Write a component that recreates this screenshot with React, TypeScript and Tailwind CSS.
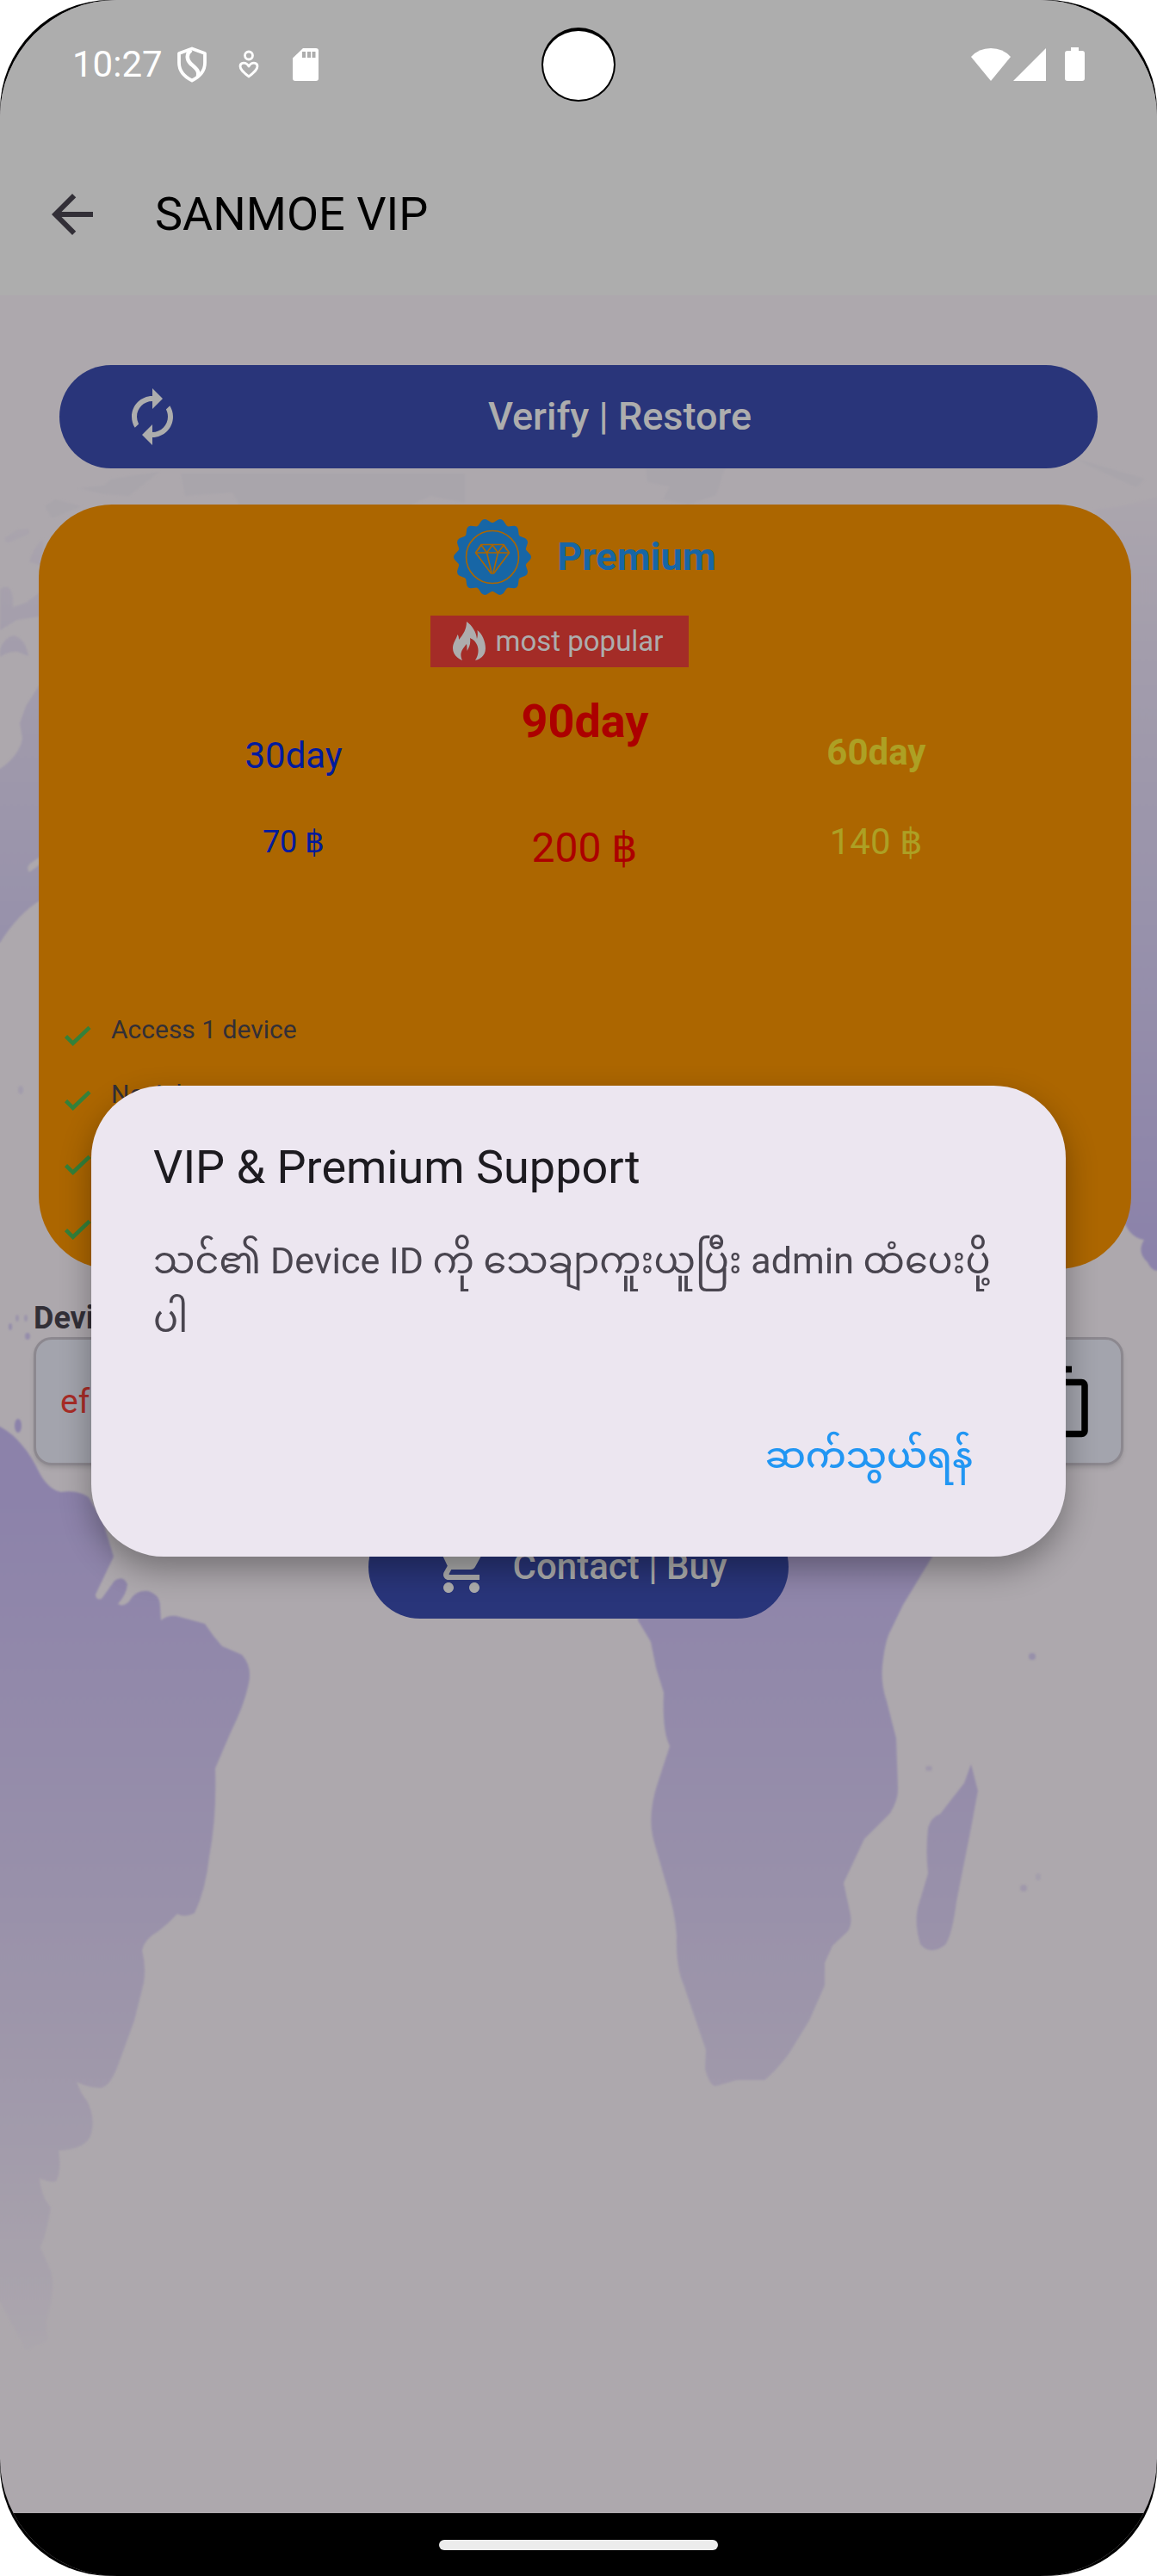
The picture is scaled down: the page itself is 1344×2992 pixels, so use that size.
import type { ReactNode } from 'react'
import { MdArrowBack, MdAutorenew, MdContentCopy, MdShoppingCart } from 'react-icons/md'

type Plan = {
  name: string
  price: string
  column: string
  title: string
  amount: string
}

const plans: Plan[] = [
  {
    name: '30day',
    price: '70 ฿',
    column: 'pt-[43px] gap-10 text-[#001a9e]',
    title: 'text-[42px] leading-[60px]',
    amount: 'text-[36px] leading-[60px]',
  },
  {
    name: '90day',
    price: '200 ฿',
    column: 'gap-[84px] text-[#ac0000]',
    title: 'text-[54px] leading-[66px] font-bold',
    amount: 'text-[48px] leading-[60px]',
  },
  {
    name: '60day',
    price: '140 ฿',
    column: 'pt-[39px] gap-11 text-[#ada024]',
    title: 'text-[42px] leading-[60px] font-bold',
    amount: 'text-[42px] leading-[60px]',
  },
]

const features = ['Access 1 device', 'No Ads', '', '']

function WorldMap() {
  return (
    <svg
      aria-hidden="true"
      className="absolute inset-0 h-full w-full"
      viewBox="0 343 1344 2576"
      preserveAspectRatio="xMidYMin slice"
    >
      <defs>
        <linearGradient id="land" gradientUnits="userSpaceOnUse" x1="0" y1="540" x2="0" y2="2740">
          <stop offset="0" stopColor="#ada8ad" />
          <stop offset="0.1" stopColor="#a39dac" />
          <stop offset="0.24" stopColor="#9892ab" />
          <stop offset="0.42" stopColor="#8b82aa" />
          <stop offset="0.54" stopColor="#8c82aa" />
          <stop offset="0.64" stopColor="#9289aa" />
          <stop offset="0.76" stopColor="#9991aa" />
          <stop offset="0.88" stopColor="#a29bab" />
          <stop offset="1" stopColor="#aca7ad" />
        </linearGradient>
        <filter id="soft" x="-5%" y="-5%" width="110%" height="110%">
          <feGaussianBlur stdDeviation="1.2" />
        </filter>
      </defs>
      <g fill="url(#land)" filter="url(#soft)">
        <path d="M-9 1656L0 1657Q15 1665 26 1679Q36 1690 47 1713Q58 1731 71 1733Q90 1730 103 1739L120 1769L132 1808L111 1852Q111 1859 118 1857L133 1836Q143 1829 148 1840Q147 1852 137 1863Q143 1867 150 1860Q158 1846 172 1848Q186 1852 186 1866L187 1882Q194 1876 205 1877L238 1886Q247 1900 258 1912L281 1922Q293 1935 289 1955Q284 1980 268 2012L250 2054Q252 2110 243 2157Q239 2195 226 2222Q215 2228 206 2223Q196 2234 184 2243Q168 2252 165 2265Q170 2285 167 2303L156 2347L137 2399Q127 2426 115 2425Q100 2424 89 2418Q94 2432 101 2440Q111 2460 106 2478Q102 2496 68 2498Q72 2520 65 2534Q56 2535 46 2530Q48 2552 59 2564Q54 2595 47 2610L60 2640Q64 2665 54 2696L56 2718L30 2730L0 2674H-9Z" />
        <path d="M741 1780V1882L756 1907L762 1937L771 1966Q769 2010 778 2028L764 2071Q751 2110 760 2140L775 2192Q784 2220 786 2248Q785 2285 794 2305L807 2343L820 2381L819 2403Q824 2422 831 2423L856 2416H888Q897 2410 916 2386L940 2347L958 2306V2280L967 2260L985 2243Q990 2235 988 2224L980 2187L1004 2136L1034 2106Q1044 2090 1043 2075L1041 2019L1030 1976Q1023 1955 1025 1935Q1028 1905 1035 1893L1049 1864L1083 1808V1780Z" />
        <path d="M1128 2049L1136 2080L1128 2123L1111 2209Q1106 2248 1098 2259Q1080 2272 1069 2258Q1062 2235 1066 2216L1078 2176Q1075 2150 1078 2123Q1082 2110 1092 2107L1120 2071Z" />
        <path d="M48 792L30 820L23 840L26 858Q22 878 0 893H-9V1095H0Q22 1060 48 1045V1003L34 1013Q30 1008 35 1003L48 994Z" />
        <path d="M0 684Q16 674 15 705L30 700L46 688V716L20 720L0 732Z" />
        <path d="M0 754Q5 740 16 738Q30 742 33 762L20 757Q10 756 0 763Z" />
        <path d="M5 625L20 615L34 614L34 620L20 626L8 631Z" />
        <path d="M34 653Q38 636 50 626V657Z" />
        <path d="M1270 592L1300 588L1353 575V1472Q1340 1482 1333 1466Q1320 1455 1329 1440Q1314 1438 1306 1420V640Z" />
        <ellipse cx="21" cy="1656" rx="4" ry="8" />
        <ellipse cx="12" cy="1541" rx="2" ry="4" opacity="0.7" />
        <ellipse cx="32" cy="1552" rx="3" ry="4" opacity="0.7" />
        <ellipse cx="20" cy="1531" rx="2" ry="4" opacity="0.5" />
        <ellipse cx="30" cy="1531" rx="2" ry="4" opacity="0.5" />
        <ellipse cx="24" cy="1266" rx="3" ry="5" opacity="0.4" />
      </g>
      <g fill="#9790aa" filter="url(#soft)">
        <ellipse cx="1199" cy="1924" rx="4" ry="4" />
        <ellipse cx="1079" cy="2054" rx="4" ry="3" opacity="0.6" />
        <ellipse cx="1189" cy="2193" rx="4" ry="4" opacity="0.6" />
        <ellipse cx="1206" cy="2180" rx="3" ry="4" opacity="0.4" />
      </g>
      <g fill="#a9a5ab" filter="url(#soft)">
        <path d="M210 550H540V584L500 576L470 590H280L270 572L215 576Z" />
        <path d="M750 545L842 544L832 575L800 586L770 580L778 565L752 560Z" />
        <path d="M92 567L120 564L130 556L185 548L150 576L120 574Z" />
        <path d="M52 588L64 580L95 588L60 602Z" />
        <path d="M1250 533L1275 540L1330 556L1320 566L1280 548Z" />
      </g>
    </svg>
  )
}

function PremiumBadge() {
  const count = 14
  const teeth = Array.from({ length: count }, (_, i) => {
    const mid = (Math.PI * 2 * i) / count
    const at = (radius: number, angle: number) =>
      `${(45 + radius * Math.cos(angle)).toFixed(1)} ${(45 + radius * Math.sin(angle)).toFixed(1)}`
    return `L${at(40, mid - 0.2)}L${at(44, mid - 0.07)}Q${at(46, mid)} ${at(44, mid + 0.07)}L${at(40, mid + 0.2)}`
  }).join('')
  return (
    <svg aria-hidden="true" className="h-[90px] w-[90px]" viewBox="0 0 90 90">
      <path d={`M${teeth.slice(1)}Z`} fill="#1766a6" />
      <g fill="none" stroke="#ac6600" strokeWidth="1.6" strokeLinejoin="round">
        <circle cx="45" cy="45" r="30.5" />
        <path d="M32 30.500H58L64.500 40L46.500 64H43.500L25.500 40Z" />
        <path d="M25.500 40H64.500M28 37L32 31L38.500 40L45 31L51.500 40L58 31L62 37M38.500 40L44 63M51.500 40L46 63" />
      </g>
    </svg>
  )
}

function Flame() {
  return (
    <svg aria-hidden="true" className="h-[46px] w-[38px]" viewBox="0 0 38 46" fill="#adadad">
      <path d="M16 0C23 5 27 12 28 20C29 17 29 14 28.500 10C34 14 38 23 38 31C38 38 34 43 26 45C30 39 31 31 27 25C24 20 21 20 20 19C21 26 19 30 16.500 34C16.500 31 16.500 29 16 26C11 32 7 37 11 45C4 42 0 37 0 31C0 24 4 21 5.500 15C7 17 7 19 7 21C12 15 16 9 16 0Z" />
    </svg>
  )
}

function CheckMark() {
  return (
    <svg aria-hidden="true" className="mt-1 h-[42px] w-[42px]" viewBox="0 0 24 24" fill="none">
      <path d="M4.300 12.300L9 17L20 6.500" stroke="#34813a" strokeWidth="2.600" />
    </svg>
  )
}

function StatusBar() {
  return (
    <div className="relative flex h-[150px] items-center justify-between pr-[84px] pl-[84px] text-white">
      <div className="flex items-center">
        <span className="text-[42px] leading-[60px]">10:27</span>
        <svg aria-hidden="true" className="ml-4 h-[42px] w-[36px]" viewBox="0 0 36 42" fill="none" stroke="#fff">
          <path strokeWidth="3.800" strokeLinejoin="round" d="M18 2.500L33 8V19C33 28 27 35 18 39.500C9 35 3 28 3 19V8Z" />
          <path strokeWidth="4.500" d="M17 4C11 9 12 15 16 19.500C22 25 27 28 25 35" />
        </svg>
        <svg aria-hidden="true" className="ml-9 h-[34px] w-[24px]" viewBox="0 0 24 34" fill="none" stroke="#fff" strokeWidth="2.800">
          <circle cx="12" cy="6.500" r="4.500" />
          <path strokeLinejoin="round" d="M12 31C6 26 2 23 2 19C2 14 9 13.500 12 19C15 13.500 22 14 22 19C22 23 18 26 12 31Z" />
        </svg>
        <svg aria-hidden="true" className="ml-[39px] h-[38px] w-[30px]" viewBox="0 0 30 38">
          <path fill="#fff" d="M12 0H27Q30 0 30 3V35Q30 38 27 38H3Q0 38 0 35V11.500Z" />
          <path fill="#adadad" d="M11 4H15V11H11ZM17 4H21V11H17ZM22.500 4H26.500V11H22.500Z" />
        </svg>
      </div>
      <div className="flex items-center">
        <svg aria-hidden="true" className="h-[40px] w-[46px]" viewBox="0 0 46 40" fill="#fff">
          <path d="M0 11Q9 1 23 1Q37 1 46 11L23 39Z" />
        </svg>
        <svg aria-hidden="true" className="ml-[3px] h-[40px] w-[38px]" viewBox="0 0 38 40" fill="#fff">
          <path d="M38 1V39H0Z" />
        </svg>
        <svg aria-hidden="true" className="ml-[22px] h-[40px] w-[23px]" viewBox="0 0 23 40" fill="#fff">
          <path d="M7 0H16V4H20Q23 4 23 7V36Q23 39 20 39H3Q0 39 0 36V7Q0 4 3 4H7Z" />
        </svg>
      </div>
      <div className="absolute top-8 left-1/2 h-[86px] w-[86px] -translate-x-1/2 rounded-full border-2 border-t-4 border-black bg-white" />
    </div>
  )
}

function PillButton({ children, className }: { children: ReactNode; className: string }) {
  return (
    <button
      type="button"
      className={`flex h-[120px] items-center rounded-full bg-[#29357a] pl-[72px] leading-[60px] font-medium text-[#adadad] ${className}`}
    >
      {children}
    </button>
  )
}

export default function App() {
  return (
    <div className="bg-white">
      <div className="overflow-hidden rounded-[128px] bg-black font-[Roboto,'Noto_Sans_Myanmar','Noto_Sans',sans-serif]">
        <div className="relative flex min-h-screen flex-col overflow-hidden rounded-[136px] bg-[#ada8ad]">
          <header className="bg-[#adadad]">
            <StatusBar />
            <div className="flex h-[193px] items-center gap-[60px] pt-1 pl-12">
              <button type="button" aria-label="Back" className="text-[#322f37]">
                <MdArrowBack className="h-[72px] w-[72px]" />
              </button>
              <h1 className="text-[54px] leading-[66px] text-black">SANMOE VIP</h1>
            </div>
          </header>

          <main className="relative flex-1 pt-[81px]">
            <WorldMap />
            <div className="relative flex flex-col">
              <PillButton className="mx-[69px] pr-12 text-[45px]">
                <MdAutorenew className="h-[72px] w-[72px]" />
                <span className="flex-1 text-center">Verify | Restore</span>
              </PillButton>

              <section className="mt-[42px] mr-[30px] ml-[45px] rounded-[85px] bg-[#ac6600] pt-4 pb-[26px]">
                <div className="flex items-center justify-center gap-[30px]">
                  <PremiumBadge />
                  <h2 className="text-[45px] leading-[60px] font-bold text-[#1766a6]">Premium</h2>
                </div>
                <div className="mt-[23px] flex justify-center pr-[60px]">
                  <div className="flex h-[60px] w-[300px] items-center gap-3 bg-[#a42c27] pl-[26px]">
                    <Flame />
                    <span className="text-[33px] leading-[42px] text-[#adadad]">most popular</span>
                  </div>
                </div>
                <div className="mx-auto mt-[30px] grid w-4/5 grid-cols-3">
                  {plans.map((plan) => (
                    <div key={plan.name} className={`flex flex-col items-center ${plan.column}`}>
                      <span className={plan.title}>{plan.name}</span>
                      <span className={plan.amount}>{plan.price}</span>
                    </div>
                  ))}
                </div>
                <ul className="mt-[163px] flex flex-col gap-[30px] px-6">
                  {features.map((feature, index) => (
                    <li key={index} className="flex h-[45px] items-start gap-[18px]">
                      <CheckMark />
                      <span className="text-[30px] leading-9 text-[#322f37]">{feature}</span>
                    </li>
                  ))}
                </ul>
              </section>

              <label htmlFor="device-id" className="mt-9 ml-[39px] text-[36px] leading-[43px] font-bold text-[#322f37]">
                Device ID
              </label>
              <div className="mx-[39px] flex h-[149px] items-center rounded-[21px] border-3 border-[#8c888f] bg-[#a3a4ad] pr-[27px] pl-7 shadow-md">
                <input
                  id="device-id"
                  readOnly
                  value="ef"
                  className="min-w-0 flex-1 bg-transparent text-[39px] leading-[48px] text-[#a82c27] outline-none"
                />
                <button type="button" aria-label="Copy device ID" className="text-black">
                  <MdContentCopy className="h-[90px] w-[90px]" />
                </button>
              </div>

              <PillButton className="mt-[58px] gap-6 self-center pr-[72px] text-[42px]">
                <MdShoppingCart className="h-[72px] w-[72px]" />
                <span>Contact | Buy</span>
              </PillButton>
            </div>
          </main>

          <footer className="flex h-[73px] items-center justify-center bg-black">
            <div className="h-3 w-[324px] rounded-full bg-[#ececec]" />
          </footer>

          <div className="absolute inset-x-0 top-[150px] bottom-[73px] flex items-center justify-center px-[106px]">
            <div
              role="dialog"
              aria-labelledby="dialog-title"
              className="flex w-full flex-col rounded-[84px] bg-[#ece6f0] px-[72px] pt-[60px] pb-[57px] shadow-[0_15px_36px_rgba(0,0,0,0.32)]"
            >
              <h2 id="dialog-title" className="text-[54px] leading-[69px] text-[#1d1b20]">
                VIP &amp; Premium Support
              </h2>
              <p className="mt-10 text-[43px] leading-[68px] text-[#49454f]">
                သင်၏ Device ID ကို သေချာကူးယူပြီး admin ထံပေးပို့ပါ
              </p>
              <button
                type="button"
                className="mt-[65px] mr-9 h-[120px] self-end text-[42px] leading-[66px] font-medium text-[#2196f3]"
              >
                ဆက်သွယ်ရန်
              </button>
            </div>
          </div>
        </div>
      </div>
    </div>
  )
}
